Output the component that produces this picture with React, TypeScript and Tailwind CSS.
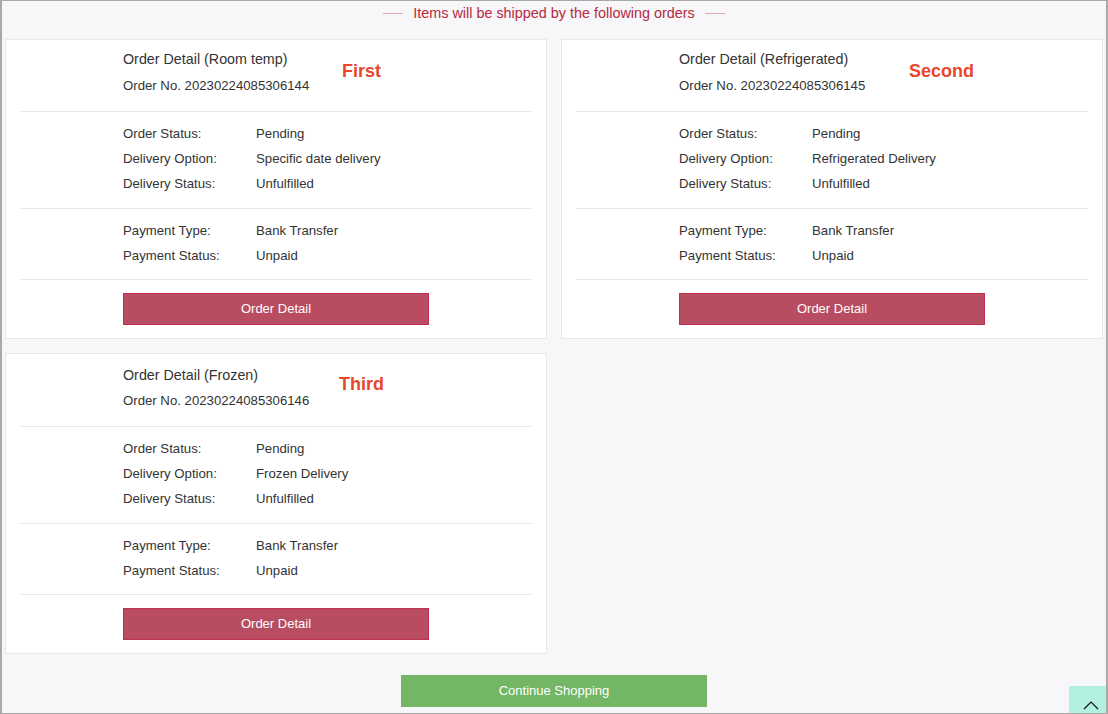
import React from "react";

type Row = [string, string];

type Order = {
  title: string;
  no: string;
  delivery: string;
  tag: string;
  tagClass: string;
  headClass: string;
  noClass: string;
};

const orders: Order[] = [
  { title: "Order Detail (Room temp)", no: "20230224085306144", delivery: "Specific date delivery", tag: "First", tagClass: "left-[336px] top-[19px]", headClass: "pt-[7px]", noClass: "mt-[1px]" },
  { title: "Order Detail (Refrigerated)", no: "20230224085306145", delivery: "Refrigerated Delivery", tag: "Second", tagClass: "left-[347px] top-[19px]", headClass: "pt-[7px]", noClass: "mt-[1px]" },
  { title: "Order Detail (Frozen)", no: "20230224085306146", delivery: "Frozen Delivery", tag: "Third", tagClass: "left-[333px] top-[18px]", headClass: "pt-[9px]", noClass: "mt-0" },
];

function Rows({ rows }: { rows: Row[] }) {
  return (
    <div className="pl-[103px]">
      {rows.map(([k, v]) => (
        <div key={k} className="flex text-[13.2px] leading-[25px] text-[#333]">
          <div className="w-[133px]">{k}</div>
          <div>{v}</div>
        </div>
      ))}
    </div>
  );
}

function Card({ o }: { o: Order }) {
  return (
    <div className="relative bg-white border border-[#e8e8ea] px-[14px]">
      <div className={`absolute ${o.tagClass} text-[18px] leading-[24px] font-bold text-[#e9472b]`}>{o.tag}</div>
      <div className={`${o.headClass} pb-[13px] border-b border-[#e8e8ea] pl-[103px] text-[#333]`}>
        <div className="text-[14.3px] leading-[25px]">{o.title}</div>
        <div className={`${o.noClass} text-[13.2px] leading-[25px]`}>Order No. {o.no}</div>
      </div>
      <div className="pt-[9px] pb-[12px] border-b border-[#e8e8ea]">
        <Rows rows={[["Order Status:", "Pending"], ["Delivery Option:", o.delivery], ["Delivery Status:", "Unfulfilled"]]} />
      </div>
      <div className="pt-[9px] pb-[11px] border-b border-[#e8e8ea]">
        <Rows rows={[["Payment Type:", "Bank Transfer"], ["Payment Status:", "Unpaid"]]} />
      </div>
      <div className="pt-[13px] pb-[13px] pl-[103px]">
        <button className="w-[306px] h-[32px] bg-[#b84c61] border border-[#c4304f] text-white text-[13px] flex items-center justify-center">
          Order Detail
        </button>
      </div>
    </div>
  );
}

export default function App() {
  return (
    <div
      className="relative w-[1108px] h-[714px] overflow-hidden bg-[#f7f7f9] border-t border-b border-l-2 border-r-2 border-[#a9a9a9]"
      style={{ fontFamily: '"Liberation Sans", Arial, sans-serif' }}
    >
      <div className="pt-[2px] flex items-center justify-center text-[14.4px] leading-[20px] text-[#b8283f]">
        <span className="w-[20px] h-px bg-[#e3a7b1]" />
        <span className="mx-[10px]">Items will be shipped by the following orders</span>
        <span className="w-[20px] h-px bg-[#e3a7b1]" />
      </div>
      <div className="mt-[16px] px-[3px] grid grid-cols-2 gap-x-[14px] gap-y-[14px] items-start">
        {orders.map((o) => (
          <Card key={o.no} o={o} />
        ))}
      </div>
      <div className="mt-[21px] flex justify-center">
        <button className="w-[306px] h-[32px] bg-[#73b665] text-white text-[13px] flex items-center justify-center">
          Continue Shopping
        </button>
      </div>
      <div className="absolute right-0 bottom-0 w-[37px] h-[27px] bg-[#b2f0e1]">
        <svg className="absolute left-[14px] top-[14px]" width="16" height="10" viewBox="0 0 16 10" fill="none">
          <path d="M1 9 L8 2 L15 9" stroke="#111" strokeWidth="1.2" />
        </svg>
      </div>
    </div>
  );
}
